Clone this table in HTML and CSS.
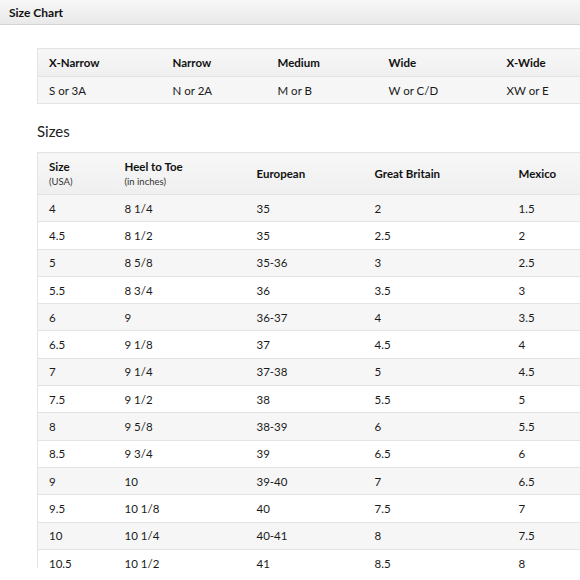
FILE: index.html
```html
<!DOCTYPE html>
<html>
<head>
<meta charset="utf-8">
<link rel="stylesheet" href="styles.css">
</head>
<body>
<div class="page">
  <div class="bar"><span class="bar-title">Size Chart</span></div>
  <div class="content">
    <table class="chart widths">
      <colgroup><col class="w1"><col class="w2"><col class="w3"><col class="w4"><col></colgroup>
      <thead>
        <tr><th>X-Narrow</th><th>Narrow</th><th>Medium</th><th>Wide</th><th>X-Wide</th></tr>
      </thead>
      <tbody>
        <tr><td>S or 3A</td><td>N or 2A</td><td>M or B</td><td>W or C/D</td><td>XW or E</td></tr>
      </tbody>
    </table>
    <h2 class="section">Sizes</h2>
    <table class="chart sizes">
      <colgroup><col class="s1"><col class="s2"><col class="s3"><col class="s4"><col></colgroup>
      <thead>
        <tr>
          <th>Size<span class="sub">(USA)</span></th>
          <th>Heel to Toe<span class="sub">(in inches)</span></th>
          <th>European</th>
          <th>Great Britain</th>
          <th>Mexico</th>
        </tr>
      </thead>
      <tbody>
        <tr><td>4</td><td>8 1/4</td><td>35</td><td>2</td><td>1.5</td></tr>
        <tr><td>4.5</td><td>8 1/2</td><td>35</td><td>2.5</td><td>2</td></tr>
        <tr><td>5</td><td>8 5/8</td><td>35-36</td><td>3</td><td>2.5</td></tr>
        <tr><td>5.5</td><td>8 3/4</td><td>36</td><td>3.5</td><td>3</td></tr>
        <tr><td>6</td><td>9</td><td>36-37</td><td>4</td><td>3.5</td></tr>
        <tr><td>6.5</td><td>9 1/8</td><td>37</td><td>4.5</td><td>4</td></tr>
        <tr><td>7</td><td>9 1/4</td><td>37-38</td><td>5</td><td>4.5</td></tr>
        <tr><td>7.5</td><td>9 1/2</td><td>38</td><td>5.5</td><td>5</td></tr>
        <tr><td>8</td><td>9 5/8</td><td>38-39</td><td>6</td><td>5.5</td></tr>
        <tr><td>8.5</td><td>9 3/4</td><td>39</td><td>6.5</td><td>6</td></tr>
        <tr><td>9</td><td>10</td><td>39-40</td><td>7</td><td>6.5</td></tr>
        <tr><td>9.5</td><td>10 1/8</td><td>40</td><td>7.5</td><td>7</td></tr>
        <tr><td>10</td><td>10 1/4</td><td>40-41</td><td>8</td><td>7.5</td></tr>
        <tr><td>10.5</td><td>10 1/2</td><td>41</td><td>8.5</td><td>8</td></tr>
      </tbody>
    </table>
  </div>
</div>
</body>
</html>
```

FILE: styles.css
```css
html, body {
  margin: 0;
  padding: 0;
  background: #fff;
}
body {
  font-family: Lato, "Liberation Sans", sans-serif;
  color: #111;
}
.page {
  width: 580px;
  height: 568px;
  overflow: hidden;
}
.bar {
  height: 24px;
  border-bottom: 1px solid #d4d4d4;
  background: linear-gradient(#f7f7f7, #e9e9e9);
  display: flex;
  align-items: center;
  padding-left: 9px;
}
.bar-title {
  font-weight: 700;
  font-size: 12px;
  color: #111;
}
.content {
  padding: 23px 0 0 37px;
}
.chart {
  border-collapse: collapse;
  table-layout: fixed;
  width: 580px;
  font-size: 11.5px;
  border: 1px solid #e3e3e3;
}
.chart th,
.chart td {
  text-align: left;
  padding: 0 0 0 11px;
  border-top: 1px solid #e3e3e3;
  white-space: nowrap;
}
.chart th {
  font-weight: 700;
  color: #111;
  background: linear-gradient(#f7f7f7, #efefef);
}
.chart td {
  color: #1a1a1a;
}
.widths th { height: 27px; }
.widths td { height: 26px; background: #f6f6f6; }
.w1 { width: 124px; }
.w2 { width: 105px; }
.w3 { width: 111px; }
.w4 { width: 118px; }

.section {
  font-size: 15px;
  font-weight: 400;
  color: #222;
  margin: 17px 0 11px;
  line-height: 20px;
}
.sizes th {
  height: 41px;
  vertical-align: middle;
  line-height: 15px;
}
.sizes td {
  height: 26.3px;
}
.sizes tbody tr:nth-child(odd) td {
  background: #f6f6f6;
}
.sub {
  display: block;
  font-weight: 400;
  font-size: 9.5px;
  color: #333;
  margin-top: 2px;
  line-height: 12px;
}
.s1 { width: 76px; }
.s2 { width: 132px; }
.s3 { width: 118px; }
.s4 { width: 144px; }
```
